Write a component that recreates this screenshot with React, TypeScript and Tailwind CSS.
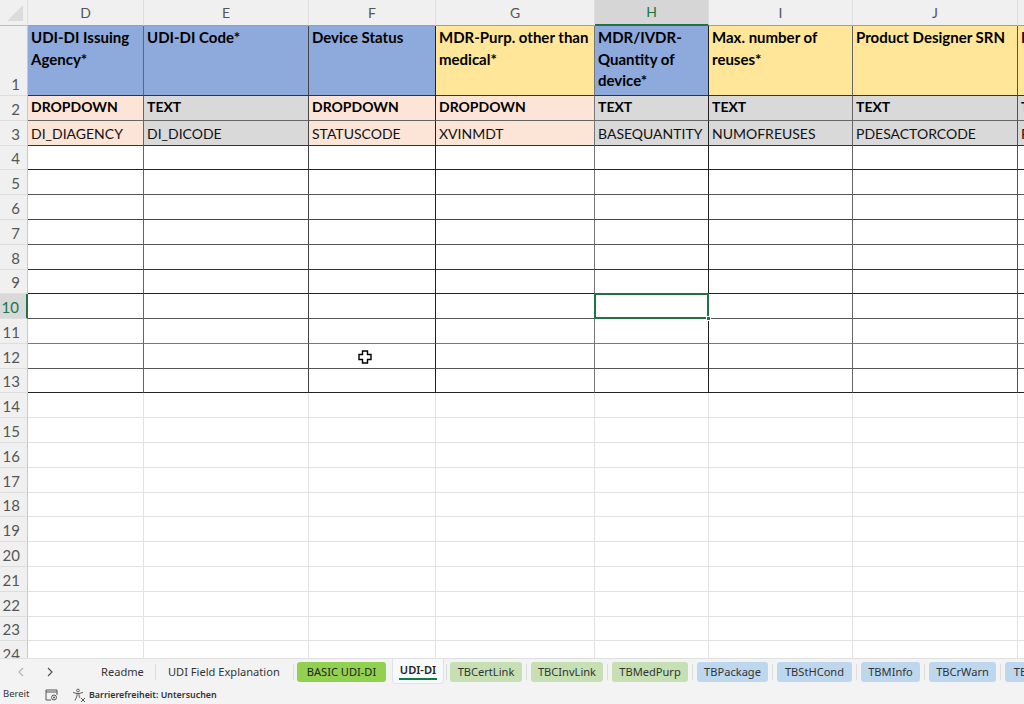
const cols = [
  { l: "D", w: 116, b: "border-r-[#666]" },
  { l: "E", w: 165, b: "border-r-[#444]" },
  { l: "F", w: 127, b: "border-r-[#222]" },
  { l: "G", w: 159, b: "border-r-[#777]" },
  { l: "H", w: 114, b: "border-r-[#222]" },
  { l: "I", w: 144, b: "border-r-[#666]" },
  { l: "J", w: 165, b: "border-r-[#555]" },
  { l: "K", w: 30, b: "border-r-[#555]" },
];

const rowHeights = [70, 25, 25, 24, 25, 25, 25, 25, 24, 25, 25, 25, 24, 25, 25, 25, 25, 24, 25, 25, 25, 25, 24, 25];
const rowLine: Record<number, string> = {
  1: "border-b-[#333]",
  2: "border-b-[#666]",
  3: "border-b-[#333]",
  4: "border-b-[#222]",
  5: "border-b-[#555]",
  6: "border-b-[#444]",
  7: "border-b-[#555]",
  8: "border-b-[#333]",
  9: "border-b-[#222]",
  10: "border-b-[#555]",
  11: "border-b-[#777]",
  12: "border-b-[#555]",
  13: "border-b-[#222]",
};

const B = "bg-[#8ea9db]";
const Y = "bg-[#ffe699]";
const P = "bg-[#fce4d6]";
const G = "bg-[#d9d9d9]";

const head: [string, string][] = [
  ["UDI-DI Issuing Agency*", B],
  ["UDI-DI Code*", B],
  ["Device Status", B],
  ["MDR-Purp. other than medical*", Y],
  ["MDR/IVDR-Quantity of device*", B],
  ["Max. number of reuses*", Y],
  ["Product Designer SRN", Y],
  ["Product", Y],
];
const types: [string, string][] = [
  ["DROPDOWN", P],
  ["TEXT", G],
  ["DROPDOWN", P],
  ["DROPDOWN", P],
  ["TEXT", G],
  ["TEXT", G],
  ["TEXT", G],
  ["TEXT", G],
];
const codes: [string, string][] = [
  ["DI_DIAGENCY", P],
  ["DI_DICODE", G],
  ["STATUSCODE", P],
  ["XVINMDT", P],
  ["BASEQUANTITY", G],
  ["NUMOFREUSES", G],
  ["PDESACTORCODE", G],
  ["PDESIGN", G],
];

const tabs = [
  { t: "TBCertLink", w: 72, c: "bg-[#c6e0b4]" },
  { t: "TBCInvLink", w: 72, c: "bg-[#c6e0b4]" },
  { t: "TBMedPurp", w: 76, c: "bg-[#c6e0b4]" },
  { t: "TBPackage", w: 71, c: "bg-[#bdd7ee]" },
  { t: "TBStHCond", w: 75, c: "bg-[#bdd7ee]" },
  { t: "TBMInfo", w: 59, c: "bg-[#bdd7ee]" },
  { t: "TBCrWarn", w: 67, c: "bg-[#bdd7ee]" },
  { t: "TBSubst", w: 60, c: "bg-[#bdd7ee]" },
];

function Sep() {
  return <div className="w-px h-[16px] bg-[#dcdcdc] shrink-0" />;
}

function Cell({ r, c }: { r: number; c: number }) {
  const col = cols[c];
  const data = r <= 13;
  const line = data ? `border-r ${col.b}` : "border-r border-r-[#e2e2e2]";
  const bottom = data ? `border-b ${rowLine[r]}` : "border-b border-b-[#e2e2e2]";
  const base = `relative overflow-hidden ${line} ${bottom}`;
  if (r === 1) {
    const [t, bg] = head[c];
    return (
      <div className={`${base} ${bg} pl-[3px] pr-[2px] pt-[1px] text-[15px] font-bold leading-[21.5px] text-black`}>
        {t}
      </div>
    );
  }
  if (r === 2) {
    const [t, bg] = types[c];
    return <div className={`${base} ${bg} whitespace-nowrap pl-[3px] text-[14px] font-bold leading-[22px] text-black`}>{t}</div>;
  }
  if (r === 3) {
    const [t, bg] = codes[c];
    return <div className={`${base} ${bg} whitespace-nowrap pl-[3px] text-[14px] leading-[25px] text-[#111]`}>{t}</div>;
  }
  if (r === 10 && c === 4) {
    return (
      <div className={`relative ${line} ${bottom} bg-white`}>
        <div className="absolute -left-px -top-px right-[-1px] bottom-[-1px] border-2 border-[#217346] z-10" />
        <div className="absolute right-[-3px] bottom-[-3px] w-[5px] h-[5px] bg-[#217346] border border-white z-20" />
      </div>
    );
  }
  return <div className={`${base} bg-white`} />;
}

export default function App() {
  const gridCols = "28px " + cols.map((c) => `${c.w}px`).join(" ");
  return (
    <div className="w-[1024px] h-[704px] overflow-hidden flex flex-col bg-[#f3f3f3] font-['Lato',sans-serif] relative">
      {/* sheet */}
      <div className="h-[658px] overflow-hidden bg-white shrink-0">
        <div className="grid" style={{ gridTemplateColumns: gridCols, gridTemplateRows: `26px ${rowHeights.map((h) => h + "px").join(" ")}` }}>
          <div className="bg-[#f0f0f0] border-r border-r-[#dedede] border-b border-b-[#bdbdbd] flex items-end justify-end pr-[3px] pb-[3px]">
            <svg width="18" height="18" viewBox="0 0 18 18"><path d="M17 1V17H1Z" fill="#dcdcdc" /></svg>
          </div>
          {cols.map((c) => (
            <div
              key={c.l}
              className={`flex items-center justify-center text-[14px] pb-[1px] border-r border-r-[#dedede] border-b ${
                c.l === "H"
                  ? "bg-[#d6d6d6] text-[#217346] border-b-[#217346] border-b-2"
                  : "bg-[#f0f0f0] text-[#555] border-b-[#9f9f9f]"
              }`}
            >
              {c.l}
            </div>
          ))}
          {rowHeights.map((_, i) => {
            const r = i + 1;
            return (
              <div key={r} className="contents">
                <div
                  className={`flex items-end justify-end pr-[7px] text-[15px] leading-[22px] border-b border-b-[#dedede] ${
                    r === 10
                      ? "bg-[#d9d9d9] text-[#217346] border-r-2 border-r-[#217346]"
                      : "bg-[#f0f0f0] text-[#555] border-r border-r-[#c8c8c8]"
                  }`}
                >
                  {r}
                </div>
                {cols.map((_, c) => (
                  <Cell key={c} r={r} c={c} />
                ))}
              </div>
            );
          })}
        </div>
      </div>

      {/* tab bar */}
      <div className="h-[27px] shrink-0 flex items-center bg-[#f3f3f3] border-t border-t-[#e0e0e0] font-['Noto_Sans',sans-serif] text-[11.1px] text-[#333] overflow-hidden">
        <div className="w-[101px] shrink-0 flex items-center pl-[16px] gap-[19px]">
          <svg width="10" height="10" viewBox="0 0 10 10" fill="none" stroke="#b5b5b5" strokeWidth="1.2"><path d="M7 1 3 5l4 4" /></svg>
          <svg width="10" height="10" viewBox="0 0 10 10" fill="none" stroke="#555" strokeWidth="1.2"><path d="M3 1l4 4-4 4" /></svg>
        </div>
        <div className="w-[54px] shrink-0">Readme</div>
        <Sep />
        <div className="w-[137px] shrink-0 pl-[12px]">UDI Field Explanation</div>
        <Sep />
        <div className="ml-[3px] w-[89px] h-[20px] shrink-0 rounded-[3px] bg-[#92d050] flex items-center justify-center text-[#222]">BASIC UDI-DI</div>
        <div className="ml-[6px] w-[52px] h-[25px] mb-[1px] shrink-0 rounded-b-[4px] bg-[#f7fafd] border-x border-b border-[#dfe3e8] flex flex-col items-center justify-center font-semibold text-[#222] leading-[14px]">
          <span>UDI-DI</span>
          <span className="w-[38px] h-[2px] bg-[#107c41] mt-[1px]" />
        </div>
        <div className="ml-[2px] mr-[3px]"><Sep /></div>
        <div className="flex items-center gap-[4px] shrink-0">
          {tabs.map((t) => (
            <div key={t.t} className="flex items-center gap-[4px] shrink-0">
              <div className={`${t.c} h-[20px] rounded-[3px] flex items-center justify-center`} style={{ width: t.w }}>{t.t}</div>
              <Sep />
            </div>
          ))}
        </div>
      </div>

      {/* status bar */}
      <div className="h-[19px] shrink-0 flex items-center bg-[#f3f3f3] font-['Noto_Sans',sans-serif] text-[9.5px] text-[#333]">
        <span className="ml-[3px] w-[42px]">Bereit</span>
        <svg width="13" height="12" viewBox="0 0 13 12" fill="none" stroke="#555" strokeWidth="1">
          <path d="M1 1h11v2H1zM1 3v8h5M12 3v3" />
          <circle cx="9" cy="8.5" r="2.5" />
          <circle cx="9" cy="8.5" r="1" fill="#555" stroke="none" />
        </svg>
        <svg className="ml-[14px]" width="14" height="14" viewBox="0 0 14 14" fill="none" stroke="#555" strokeWidth="0.9">
          <circle cx="6" cy="2.5" r="1.4" />
          <path d="M1 4.5 5 5.5h2l4-1M5 5.5V8l-2 4.5M7 5.5V8l1 2" />
          <path d="M9 10l4 4M13 10l-4 4" stroke="#444" />
        </svg>
        <span className="ml-[3px] font-semibold text-[8.9px]">Barrierefreiheit: Untersuchen</span>
      </div>

      {/* mouse pointer over the sheet */}
      <svg className="absolute left-[358px] top-[350px] z-30" width="14" height="14" viewBox="0 0 14 14">
        <path d="M4.5 1h5v3.5H13v5H9.5V13h-5V9.5H1v-5h3.5z" fill="#fff" stroke="#000" strokeWidth="1.4" />
      </svg>
    </div>
  );
}
